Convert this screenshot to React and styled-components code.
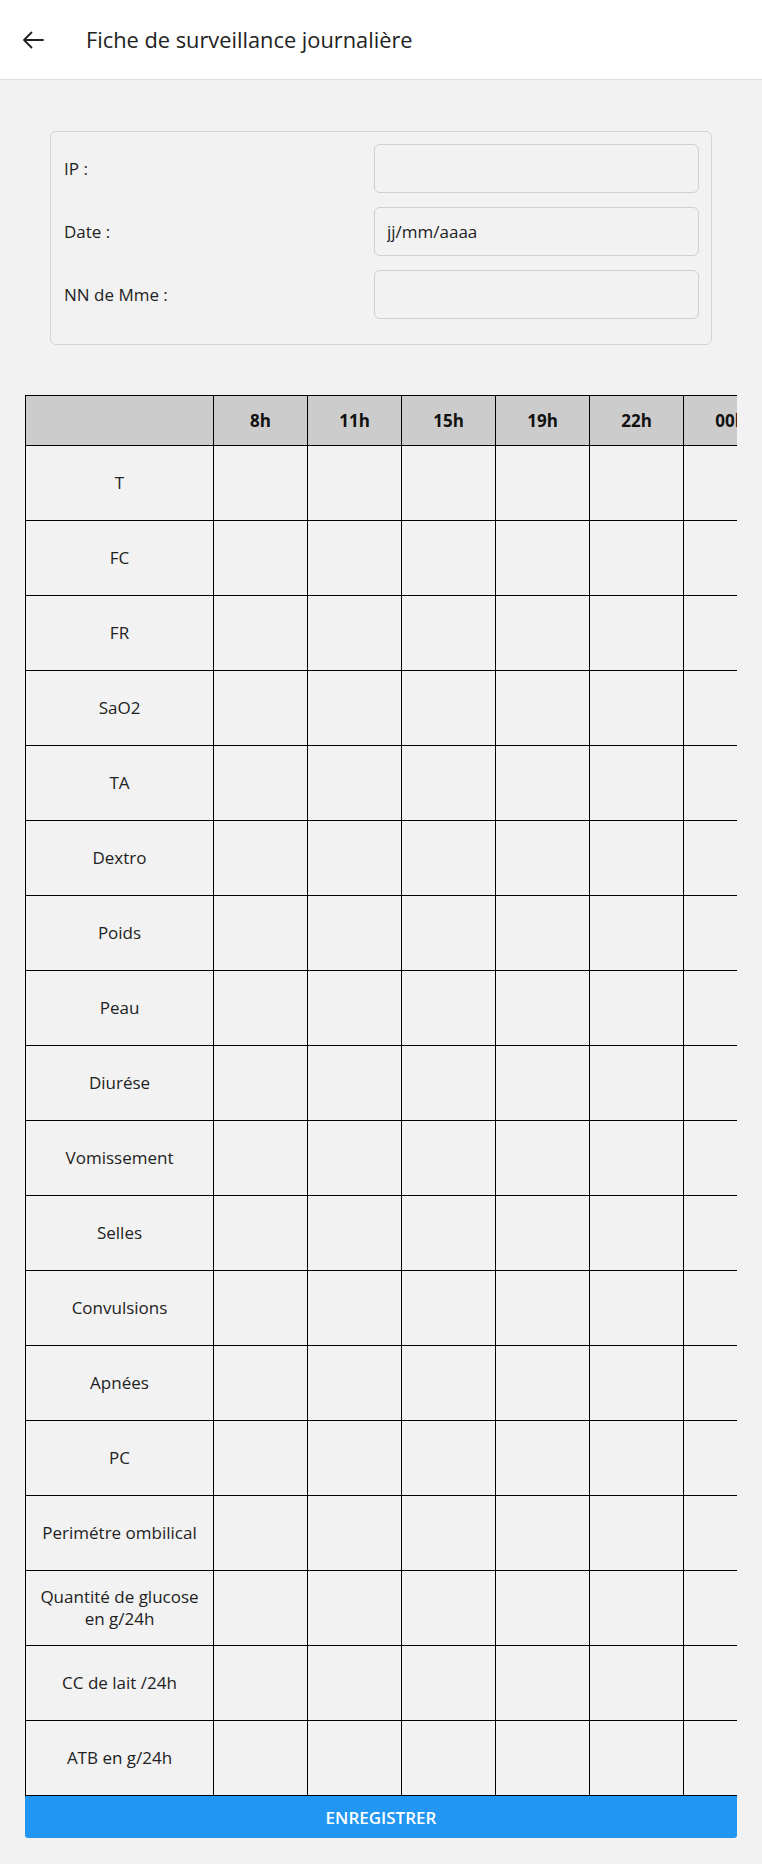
import React from "react";
import styled, { createGlobalStyle } from "styled-components";

const GlobalStyle = createGlobalStyle`
  body {
    margin: 0;
    background: #f2f2f2;
    font-family: "Open Sans", "Noto Sans", sans-serif;
    color: #222;
  }
`;

const TopBar = styled.header`
  display: flex;
  align-items: center;
  height: 79px;
  padding-left: 22px;
  background: #fff;
  border-bottom: 1px solid #dcdcdc;
`;

const BackButton = styled.button`
  display: flex;
  align-items: center;
  justify-content: center;
  padding: 0;
  margin-right: 42px;
  border: none;
  background: none;
  cursor: pointer;
  color: #222;
`;

const Title = styled.h1`
  margin: 0;
  font-size: 21.8px;
  font-weight: 500;
  color: #222;
`;

const Content = styled.main`
  padding: 51px 0 26px;
`;

const InfoCard = styled.section`
  display: grid;
  grid-template-columns: 1fr 325px;
  align-items: center;
  row-gap: 14px;
  margin: 0 50px;
  padding: 12px 12px 25px 13px;
  border: 1px solid #d4d4d4;
  border-radius: 6px;
`;

const Label = styled.label`
  font-size: 17px;
  color: #222;
`;

const Field = styled.input`
  box-sizing: border-box;
  width: 100%;
  height: 49px;
  padding: 0 12px;
  border: 1px solid #cfcfcf;
  border-radius: 6px;
  background: transparent;
  font-family: inherit;
  font-size: 17px;
  color: #222;
  outline: none;

  &::placeholder {
    color: #222;
  }
`;

const Sheet = styled.section`
  margin: 50px 25px 0;
`;

const ScrollArea = styled.div`
  overflow-x: auto;
  scrollbar-width: none;

  &::-webkit-scrollbar {
    display: none;
  }
`;

const Grid = styled.table`
  border-collapse: collapse;
  table-layout: fixed;
  width: 931px;
`;

const HeadCell = styled.th`
  width: ${(p) => (p.$wide ? "187px" : "93px")};
  height: 49px;
  padding: 0;
  background: #cccccc;
  border: 1px solid #000;
  font-size: 17px;
  font-weight: 700;
  color: #111;
  text-align: center;
  white-space: nowrap;
`;

const RowLabel = styled.td`
  height: 74px;
  padding: 0 12px;
  border: 1px solid #000;
  font-size: 17px;
  line-height: 1.3;
  text-align: center;
  color: #222;
`;

const Cell = styled.td`
  border: 1px solid #000;
`;

const SaveButton = styled.button`
  display: block;
  width: 100%;
  height: 42px;
  border: none;
  border-radius: 0 0 3px 3px;
  background: #2196f3;
  color: #fff;
  font-family: inherit;
  font-size: 17px;
  font-weight: 600;
  cursor: pointer;
`;

const hours = ["8h", "11h", "15h", "19h", "22h", "00h", "03h", "05h"];

const rows = [
  "T",
  "FC",
  "FR",
  "SaO2",
  "TA",
  "Dextro",
  "Poids",
  "Peau",
  "Diurése",
  "Vomissement",
  "Selles",
  "Convulsions",
  "Apnées",
  "PC",
  "Perimétre ombilical",
  "Quantité de glucose en g/24h",
  "CC de lait /24h",
  "ATB en g/24h",
];

function BackArrow() {
  return (
    <svg width="22" height="18" viewBox="0 0 22 18" fill="none">
      <path
        d="M21 9H2M9.5 1.5L2 9l7.5 7.5"
        stroke="currentColor"
        strokeWidth="1.8"
        strokeLinecap="round"
        strokeLinejoin="round"
      />
    </svg>
  );
}

export default function App() {
  return (
    <>
      <GlobalStyle />
      <TopBar>
        <BackButton aria-label="Retour">
          <BackArrow />
        </BackButton>
        <Title>Fiche de surveillance journalière</Title>
      </TopBar>
      <Content>
        <InfoCard>
          <Label>IP :</Label>
          <Field type="text" />
          <Label>Date :</Label>
          <Field type="text" placeholder="jj/mm/aaaa" />
          <Label>NN de Mme :</Label>
          <Field type="text" />
        </InfoCard>

        <Sheet>
          <ScrollArea>
            <Grid>
              <thead>
                <tr>
                  <HeadCell $wide />
                  {hours.map((h) => (
                    <HeadCell key={h}>{h}</HeadCell>
                  ))}
                </tr>
              </thead>
              <tbody>
                {rows.map((r) => (
                  <tr key={r}>
                    <RowLabel>{r}</RowLabel>
                    {hours.map((h) => (
                      <Cell key={h} />
                    ))}
                  </tr>
                ))}
              </tbody>
            </Grid>
          </ScrollArea>
          <SaveButton>ENREGISTRER</SaveButton>
        </Sheet>
      </Content>
    </>
  );
}
